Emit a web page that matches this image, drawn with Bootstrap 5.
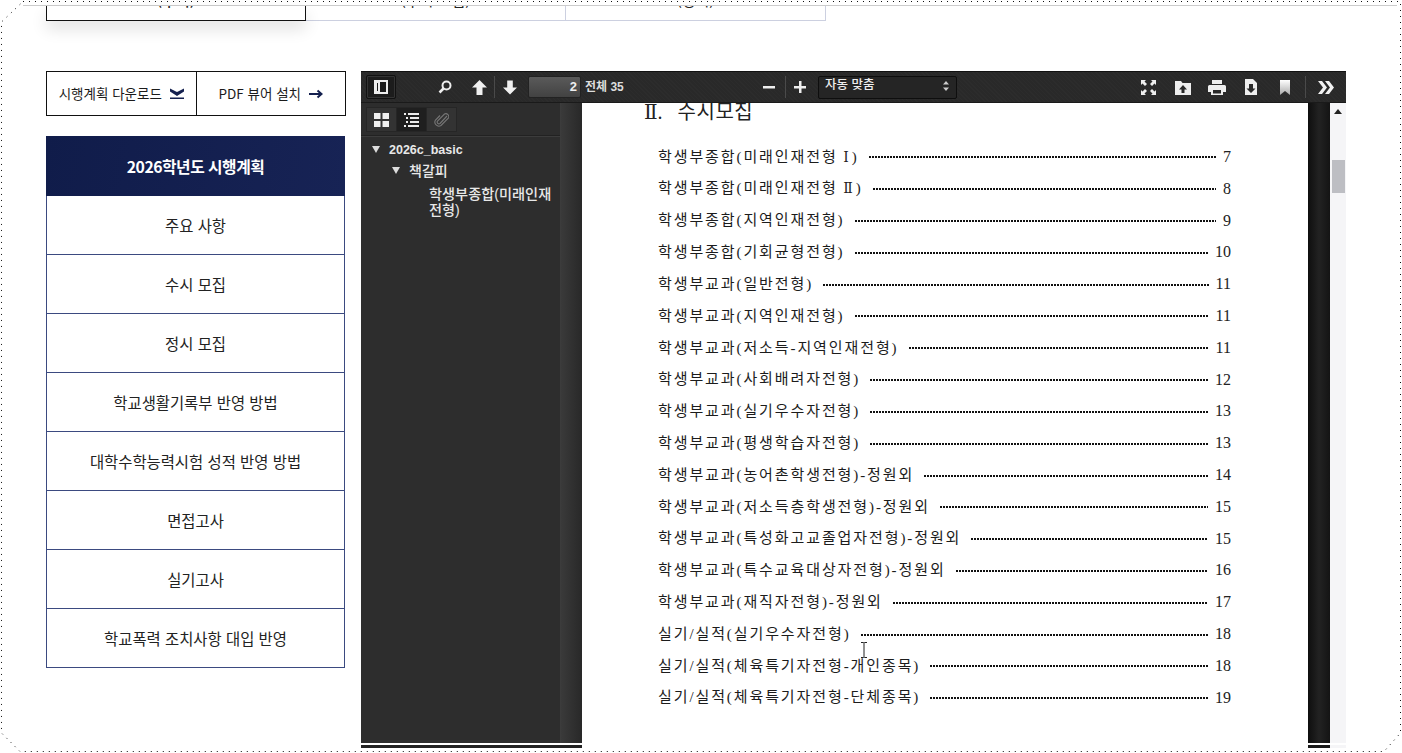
<!DOCTYPE html>
<html lang="ko">
<head>
<meta charset="utf-8">
<title>2026학년도 시행계획</title>
<link href="https://cdn.jsdelivr.net/npm/bootstrap@5.3.0/dist/css/bootstrap.min.css" rel="stylesheet">
<style>
html,body{height:753px;overflow:hidden;background:#fff}
body{font-family:"Noto Sans CJK KR","Liberation Sans",sans-serif;color:#222;position:relative}
.edge{position:absolute;left:0;top:0;width:1402px;height:753px;pointer-events:none;z-index:5}
.wrap{padding:5px 5px 0 23px}
.tabs-row{border-top:1px solid #ccc;height:16px;padding-left:23px}
.tabx{width:260px;height:15px;overflow:hidden;border:1px solid #ccd0e0;border-top:0;border-left-width:0;font-size:15px;line-height:20px;text-align:center;background:#fff}
.tabx span{display:block;margin-top:-16px}
.tabx.on{width:260px;border:1px solid #111;border-top:0;box-shadow:0 8px 16px rgba(0,0,0,.12);position:relative;z-index:1;font-weight:500}
.main-row{margin:50px 0 0 23px;gap:15px}
.leftcol{width:300px;flex:none}
.dlbar{height:45px;border:1px solid #111;font-size:13.5px;color:#1b1b1b}
.dlbar a{color:inherit;text-decoration:none;height:100%;gap:8px}
.dl1{width:150px;border-right:1px solid #111}
.dl2{width:149px}
.menux{width:299px;margin-top:20px}
.menux-h{height:60px;background:#14204f;background-image:linear-gradient(100deg,#101c4a,#172355);color:#fff;font-weight:700;font-size:15.8px;letter-spacing:-.5px;padding-top:1px}
.menux-i{height:59px;border:1px solid #3b4a80;border-top:0;font-size:15.4px;color:#222;padding-top:1px}
.viewer{width:985px;flex:none;height:677px;font-family:"Liberation Sans","Noto Sans CJK KR",sans-serif}
.tbar{height:32px;background:#292929;background-image:repeating-linear-gradient(45deg,rgba(255,255,255,.015) 0 1px,transparent 1px 3px);border-top:1px solid #111;border-bottom:1px solid #1a1a1a;color:#eee;font-size:12px}
.tb-left{width:402px;padding-left:5px}
.tb-tog{width:30px;height:24px;background:#1c1c1c;border:1px solid #111;border-radius:2px;box-shadow:inset 0 0 0 1px #333}
.i-search{margin-left:42px}.i-up{margin-left:20px}
.vsep{width:1px;height:22px;background:#4a4a4a}
.sep1{margin:0 8px 0 7px}
.pg-in{width:53px;height:22px;margin-left:11px;background:linear-gradient(#5a5a5a,#424242);border:1px solid #222;border-radius:2px;text-align:right;padding-right:3px;line-height:20px;font-weight:700;font-size:13px}
.pg-lab{margin-left:4px;font-weight:700;color:#ddd}
.sep2{margin:0 8px 0 10px}
.selx{width:139px;height:23px;margin-left:12px;background:#252525;border:1px solid #0e0e0e;border-radius:2px;padding:0 7px 3px 6px;font-size:12.5px;font-weight:500}
.tb-right{padding-right:12px}
.tb-right svg{display:block}
.r2{margin-left:19px}.r3{margin-left:17px}.r4{margin-left:18px}.r5{margin-left:21px}
.sep3{margin:0 12px 0 14px}
.vbody{height:640px;overflow:hidden}
.side{width:200px;background:#2d2d2d;border-right:1px solid #3c3c3c;color:#e8e8e8;font-size:12.5px;font-weight:700}
.side-tabs{height:33px;border-bottom:1px solid #222;box-shadow:0 1px 0 #3c3c3c;padding:4px 0 0 5px}
.stab{width:31px;height:25px;background:#333;border:1px solid #262626;margin-right:-1px}
.stab.cur{background:#1f1f1f}
.tree{line-height:16px}
.tw{width:0;height:0;border-left:4.5px solid transparent;border-right:4.5px solid transparent;border-top:7px solid #ddd;margin-right:9px;flex:none}
.t1{padding:5px 0 0 11px;height:22px}
.t2{padding:3px 0 0 31px;height:22px;font-size:14px;font-weight:500}
.t3{padding:6px 6px 0 68px;line-height:16px;font-size:14.2px;font-weight:500}
.gutter{width:21px;background:linear-gradient(90deg,#3a3a3a,#282828)}
.pagex{width:726px;background:#fff;overflow:hidden;padding:0 77px 0 62px;position:relative}
.headx{font-family:"Liberation Serif","DejaVu Serif","Noto Sans CJK KR",sans-serif;font-size:20px;line-height:24px;margin-top:-3px;color:#222;height:41px}
.headx b{font-weight:400;margin-left:10px;font-size:20px;letter-spacing:.5px}
.tocx{margin-left:14px;font-family:"Liberation Serif","DejaVu Serif","Noto Sans CJK KR",serif;font-size:15px;letter-spacing:1.9px;color:#1c1c1c}
.tocx i{font-style:normal;letter-spacing:-1px;font-size:14px;margin-right:4px}
.tocr{height:31.82px}
.tocr .ldr{flex:1;height:2px;background:repeating-linear-gradient(90deg,#111 0 2px,transparent 2px 3px);margin:1px 7px 0 10px}
.tocr .pn{font-size:16px;letter-spacing:0;color:#222}
.gut2{width:22px;background:linear-gradient(90deg,#0e0e0e,#222 50%,#141414)}
.sbar{width:16px;background:#f5f5f7;padding-top:6px}
.sb-up{width:0;height:0;border-left:4px solid transparent;border-right:4px solid transparent;border-bottom:5px solid #222;margin:0 auto}
.sb-th{width:13px;height:33px;background:#bdbec3;margin:46px auto 0}
.foot{height:3px;margin-top:2px}
.f1{width:221px;background:#222}.f2{width:726px;background:#fff}.f3{width:22px;background:#1a1a1a}.f4{width:16px;background:#f5f5f7}
.ibeam{position:absolute;left:860px;top:642px;z-index:4}
</style>
</head>
<body>
<svg class="edge" viewBox="0 0 1402 753" fill="none"><path d="M23 1.500H1400.500V733L1384 751.500H20L1.500 733V22Z" stroke="#111" stroke-width="1" stroke-dasharray="1 5"/></svg>

<div class="wrap">
  <div class="tabs-row d-flex">
    <div class="tabx on"><span>(수시)</span></div>
    <div class="tabx"><span>(수시 모집)</span></div>
    <div class="tabx"><span>(정시)</span></div>
  </div>
  <div class="main-row d-flex">
    <div class="leftcol">
      <div class="dlbar d-flex">
        <a href="#" class="dl1 d-flex align-items-center justify-content-center">시행계획 다운로드
          <svg width="14" height="11" viewBox="0 0 14 11"><path d="M0 0.500L7 4 14 0.500V3.500L7 8 0 3.500z" fill="#14204f"/><rect x="0" y="9.500" width="14" height="1.500" fill="#14204f"/></svg></a>
        <a href="#" class="dl2 d-flex align-items-center justify-content-center">PDF 뷰어 설치
          <svg width="14" height="10" viewBox="0 0 14 10"><path d="M0 5h12M8.500 1.500L12.500 5 8.500 8.500" stroke="#14204f" stroke-width="2" fill="none"/></svg></a>
      </div>
      <div class="menux">
        <div class="menux-h d-flex align-items-center justify-content-center">2026학년도 시행계획</div>
        <div class="menux-i d-flex align-items-center justify-content-center">주요 사항</div>
        <div class="menux-i d-flex align-items-center justify-content-center">수시 모집</div>
        <div class="menux-i d-flex align-items-center justify-content-center">정시 모집</div>
        <div class="menux-i d-flex align-items-center justify-content-center">학교생활기록부 반영 방법</div>
        <div class="menux-i d-flex align-items-center justify-content-center">대학수학능력시험 성적 반영 방법</div>
        <div class="menux-i d-flex align-items-center justify-content-center">면접고사</div>
        <div class="menux-i d-flex align-items-center justify-content-center">실기고사</div>
        <div class="menux-i d-flex align-items-center justify-content-center">학교폭력 조치사항 대입 반영</div>
      </div>
    </div>

    <div class="viewer">
      <div class="tbar d-flex align-items-center">
        <div class="tb-left d-flex align-items-center">
          <div class="tb-tog d-flex align-items-center justify-content-center"><svg width="14" height="14" viewBox="0 0 14 14"><path d="M1 1h12v12H1z" fill="none" stroke="#eee" stroke-width="2"/><rect x="1" y="1" width="5" height="12" fill="#eee"/><rect x="3" y="3" width="1" height="8" fill="#1c1c1c"/></svg></div>
          <svg class="i-search" width="14" height="14" viewBox="0 0 14 14"><circle cx="8.500" cy="5.500" r="4" fill="none" stroke="#eee" stroke-width="2"/><path d="M5.500 8.500L1.500 12.500" stroke="#eee" stroke-width="2.500"/></svg>
          <svg class="i-up" width="15" height="15" viewBox="0 0 15 15"><path d="M7.500 0L15 7.500H10.500V15H4.500V7.500H0z" fill="#f0f0f0"/></svg>
          <span class="vsep sep1"></span>
          <svg width="14" height="15" viewBox="0 0 15 15"><path d="M7.500 15L15 7.500H10.500V0H4.500V7.500H0z" fill="#f0f0f0"/></svg>
          <div class="pg-in">2</div>
          <span class="pg-lab">전체 35</span>
        </div>
        <svg width="12" height="12" viewBox="0 0 12 12"><rect y="5" width="12" height="2.500" fill="#eee"/></svg>
        <span class="vsep sep2"></span>
        <svg width="12" height="12" viewBox="0 0 12 12"><path d="M0 5h5V0h2.500v5H12v2.500H7.500V12H5V7.500H0z" fill="#eee"/></svg>
        <div class="selx d-flex align-items-center justify-content-between"><span>자동 맞춤</span><svg width="6" height="10" viewBox="0 0 6 10"><path d="M3 0l3 3.500H0zM3 10L0 6.500h6z" fill="#ccc"/></svg></div>
        <div class="tb-right ms-auto d-flex align-items-center">
          <svg width="15" height="15" viewBox="0 0 15 15"><path d="M0 0h5L3.500 1.500 6 4 4 6 1.500 3.500 0 5zM15 0v5L13.500 3.500 11 6 9 4l2.500-2.500L10 0zM0 15v-5l1.500 1.500L4 9l2 2-2.500 2.500L5 15zM15 15h-5l1.500-1.500L9 11l2-2 2.500 2.500L15 10z" fill="#eee"/></svg>
          <svg class="r2" width="16" height="15" viewBox="0 0 16 15"><path d="M0 1h6l1.500 2H16v12H0z" fill="#eee"/><path d="M8 5l4 4.500H9.500V13h-3V9.500H4z" fill="#292929"/></svg>
          <svg class="r3" width="18" height="15" viewBox="0 0 18 15"><path d="M4 0h10v4H4zM1.500 5h15A1.500 1.500 0 0 1 18 6.500V12h-3v3H3v-3H0V6.500A1.500 1.500 0 0 1 1.500 5z" fill="#eee"/><rect x="5" y="10" width="8" height="3.500" fill="#292929"/></svg>
          <svg class="r4" width="14" height="16" viewBox="0 0 14 16"><path d="M1 0h8l4 4v12H1z" fill="#eee"/><path d="M7 14L2.500 9.500H5V5h4v4.500h2.500z" fill="#292929"/></svg>
          <svg class="r5" width="12" height="15" viewBox="0 0 12 15"><defs><linearGradient id="bk" x1="0" y1="0" x2="0" y2="1"><stop offset="0" stop-color="#fff"/><stop offset="1" stop-color="#aaa"/></linearGradient></defs><path d="M1 0h10v15L6 11 1 15z" fill="url(#bk)"/></svg>
          <span class="vsep sep3"></span>
          <svg width="16" height="13" viewBox="0 0 16 13"><path d="M0 0h4l5 6.500L4 13H0l5-6.500zM7 0h4l5 6.500L11 13H7l5-6.500z" fill="#f2f2f2"/></svg>
        </div>
      </div>

      <div class="vbody d-flex">
        <div class="side">
          <div class="side-tabs d-flex">
            <div class="stab d-flex align-items-center justify-content-center"><svg width="15" height="14" viewBox="0 0 15 14"><path d="M0 0h6.500v6H0zM8.500 0H15v6H8.500zM0 8h6.500v6H0zM8.500 8H15v6H8.500z" fill="#f0f0f0"/></svg></div>
            <div class="stab cur d-flex align-items-center justify-content-center"><svg width="15" height="14" viewBox="0 0 15 14"><path d="M0 0h2v2H0zM4 0h11v2H4zM2 4h2v2H2zM6 4h9v2H6zM2 8h2v2H2zM6 8h9v2H6zM0 12h2v2H0zM4 12h11v2H4z" fill="#eee"/></svg></div>
            <div class="stab d-flex align-items-center justify-content-center"><svg width="15" height="15" viewBox="0 0 15 15"><path d="M13 4L6 11.500a1.800 1.800 0 0 1-2.500-2.500L10.500 2a3 3 0 0 1 4 4L7 13.500A4 4 0 0 1 1.500 8L6 3.500" fill="none" stroke="#777" stroke-width="1.100"/></svg></div>
          </div>
          <div class="tree">
            <div class="t1 d-flex align-items-center"><span class="tw"></span>2026c_basic</div>
            <div class="t2 d-flex align-items-center"><span class="tw"></span>책갈피</div>
            <div class="t3">학생부종합(미래인재전형)</div>
          </div>
        </div>
        <div class="gutter"></div>
        <div class="pagex">
          <div class="headx">Ⅱ. <b>수시모집</b></div>
          <div class="tocx">
            <div class="tocr d-flex align-items-center"><span>학생부종합(미래인재전형 <i>Ⅰ</i>)</span><span class="ldr"></span><span class="pn">7</span></div>
            <div class="tocr d-flex align-items-center"><span>학생부종합(미래인재전형 <i>Ⅱ</i>)</span><span class="ldr"></span><span class="pn">8</span></div>
            <div class="tocr d-flex align-items-center"><span>학생부종합(지역인재전형)</span><span class="ldr"></span><span class="pn">9</span></div>
            <div class="tocr d-flex align-items-center"><span>학생부종합(기회균형전형)</span><span class="ldr"></span><span class="pn">10</span></div>
            <div class="tocr d-flex align-items-center"><span>학생부교과(일반전형)</span><span class="ldr"></span><span class="pn">11</span></div>
            <div class="tocr d-flex align-items-center"><span>학생부교과(지역인재전형)</span><span class="ldr"></span><span class="pn">11</span></div>
            <div class="tocr d-flex align-items-center"><span>학생부교과(저소득-지역인재전형)</span><span class="ldr"></span><span class="pn">11</span></div>
            <div class="tocr d-flex align-items-center"><span>학생부교과(사회배려자전형)</span><span class="ldr"></span><span class="pn">12</span></div>
            <div class="tocr d-flex align-items-center"><span>학생부교과(실기우수자전형)</span><span class="ldr"></span><span class="pn">13</span></div>
            <div class="tocr d-flex align-items-center"><span>학생부교과(평생학습자전형)</span><span class="ldr"></span><span class="pn">13</span></div>
            <div class="tocr d-flex align-items-center"><span>학생부교과(농어촌학생전형)-정원외</span><span class="ldr"></span><span class="pn">14</span></div>
            <div class="tocr d-flex align-items-center"><span>학생부교과(저소득층학생전형)-정원외</span><span class="ldr"></span><span class="pn">15</span></div>
            <div class="tocr d-flex align-items-center"><span>학생부교과(특성화고교졸업자전형)-정원외</span><span class="ldr"></span><span class="pn">15</span></div>
            <div class="tocr d-flex align-items-center"><span>학생부교과(특수교육대상자전형)-정원외</span><span class="ldr"></span><span class="pn">16</span></div>
            <div class="tocr d-flex align-items-center"><span>학생부교과(재직자전형)-정원외</span><span class="ldr"></span><span class="pn">17</span></div>
            <div class="tocr d-flex align-items-center"><span>실기/실적(실기우수자전형)</span><span class="ldr"></span><span class="pn">18</span></div>
            <div class="tocr d-flex align-items-center"><span>실기/실적(체육특기자전형-개인종목)</span><span class="ldr"></span><span class="pn">18</span></div>
            <div class="tocr d-flex align-items-center"><span>실기/실적(체육특기자전형-단체종목)</span><span class="ldr"></span><span class="pn">19</span></div>
          </div>
        </div>
        <div class="gut2"></div>
        <div class="sbar"><div class="sb-up"></div><div class="sb-th"></div></div>
      </div>
      <div class="foot d-flex"><div class="f1"></div><div class="f2"></div><div class="f3"></div><div class="f4"></div></div>
    </div>
  </div>
</div>
<svg class="ibeam" width="8" height="16" viewBox="0 0 8 16"><path d="M1 .5h2.500L4 1l.5-.5H7M4 1v14M1 15.500h2.500L4 15l.5.500H7" stroke="#222" fill="none"/></svg>
<script src="https://cdn.jsdelivr.net/npm/bootstrap@5.3.0/dist/js/bootstrap.bundle.min.js"></script>
</body>
</html>
